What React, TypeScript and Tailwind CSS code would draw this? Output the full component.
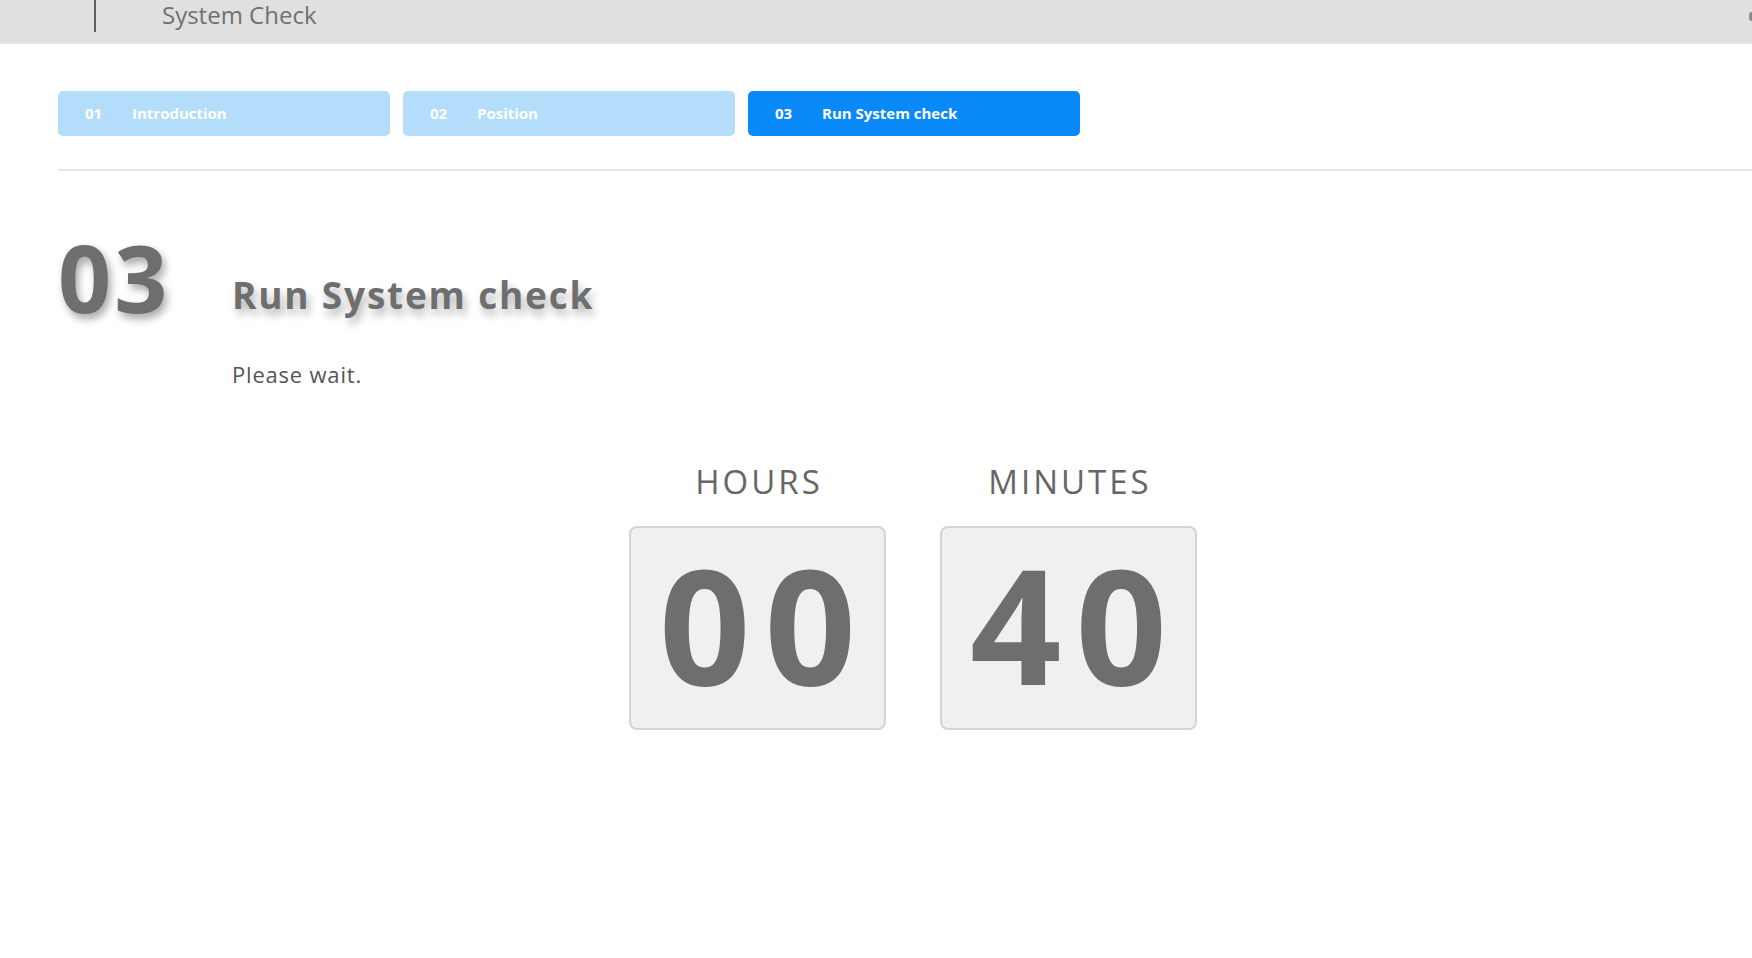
import React from "react";

const STEPS = [
  { num: "01", label: "Introduction", active: false },
  { num: "02", label: "Position", active: false },
  { num: "03", label: "Run System check", active: true },
];

function TimeBox({ label, value }: { label: string; value: string }) {
  return (
    <div className="flex flex-col items-center w-[257px]">
      <div className="text-[33px] leading-none text-[#666666] tracking-[3px] pl-[3px] mb-[28px]">{label}</div>
      <div className="w-[257px] h-[204px] rounded-[8px] border-2 border-[#d4d4d4] bg-[#f0f0f0] flex items-center justify-center">
        <span className="text-[160px] leading-none font-bold text-[#6e6e6e] tracking-[14px] pl-[14px] -mt-[10px]">
          {value}
        </span>
      </div>
    </div>
  );
}

export default function App() {
  return (
    <div className="min-h-screen bg-white font-['Open_Sans',sans-serif]">
      {/* Header */}
      <header className="h-[44px] bg-[#e0e0e0] border-b border-[#e9e9e9] flex items-start">
        <div className="ml-[94px] w-[2px] h-[32px] bg-[#5f5f5f]" />
        <div className="ml-[66px] h-[30px] leading-[30px] text-[24px] text-[#707070]">System Check</div>
        <div className="ml-auto mt-[12px] w-[3px] h-[9px] rounded-l bg-[#8a8a8a]" />
      </header>

      {/* Steps */}
      <nav className="mt-[47px] ml-[58px] flex gap-[13px]">
        {STEPS.map((s) => (
          <div
            key={s.num}
            className={
              s.active
                ? "w-[332px] h-[45px] rounded-[5px] bg-[#0a8af8] flex items-center pl-[27px] text-[15px] font-bold text-white"
                : "w-[332px] h-[45px] rounded-[5px] bg-[#b4ddfc] flex items-center pl-[27px] text-[15px] font-bold text-white"
            }
          >
            <span className="w-[47px]">{s.num}</span>
            <span>{s.label}</span>
          </div>
        ))}
      </nav>

      <div className="mt-[33px] ml-[58px] border-t-2 border-[#e6e6e6]" />

      {/* Title */}
      <section className="ml-[58px] mt-[60px]">
        <div className="flex items-start">
          <div className="w-[174px] text-[93px] leading-none font-bold text-[#6e6e6e] tracking-[3px] [text-shadow:3px_5px_8px_rgba(0,0,0,0.35)]">
            03
          </div>
          <h1 className="mt-[45px] text-[37px] leading-none font-bold text-[#6e6e6e] tracking-[1.8px] [text-shadow:3px_6px_8px_rgba(0,0,0,0.3)]">
            Run System check
          </h1>
        </div>
        <p className="ml-[174px] mt-[39px] text-[22px] leading-none text-[#555555] tracking-[0.8px]">Please wait.</p>
      </section>

      {/* Countdown */}
      <section className="mt-[80px] pl-[74px] flex justify-center gap-[54px]">
        <TimeBox label="HOURS" value="00" />
        <TimeBox label="MINUTES" value="40" />
      </section>
    </div>
  );
}
